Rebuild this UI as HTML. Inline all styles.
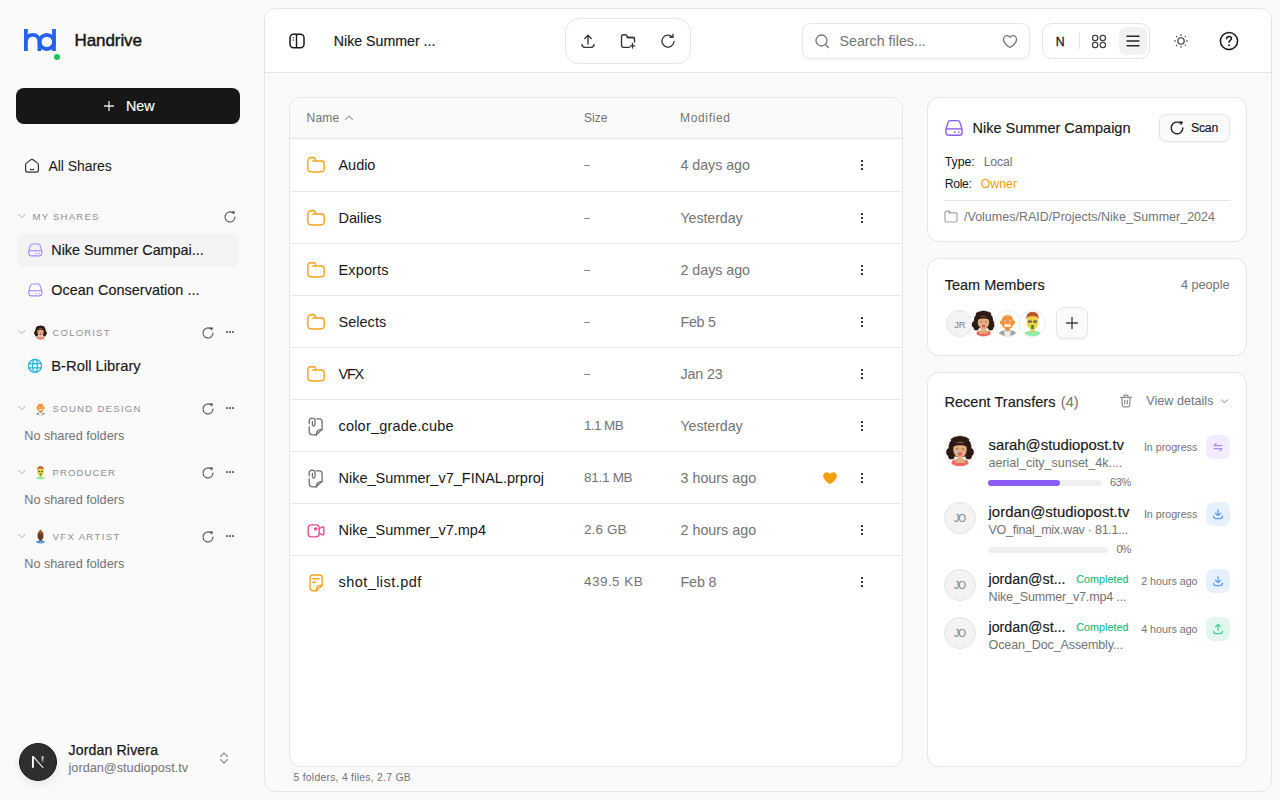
<!DOCTYPE html>
<html><head><meta charset="utf-8">
<style>
*{box-sizing:border-box;margin:0;padding:0}
html,body{width:1280px;height:800px;overflow:hidden;background:#fafafa;font-family:"Liberation Sans",sans-serif;color:#171717}
.abs{position:absolute}
svg{display:block;overflow:visible}
.t{position:absolute;white-space:nowrap;line-height:1}
</style></head><body>
<svg class="abs" style="left:24px;top:29px" width="40" height="32" viewBox="0 0 40 32"><g fill="none" stroke="#2563eb" stroke-width="3.8">
      <path d="M1.9 0V22"/>
      <path d="M1.9 13C1.9 8 5 5.8 8.7 5.8C12.4 5.8 15.4 8 15.4 13V22"/>
      <ellipse cx="22.8" cy="12.9" rx="7.2" ry="7.1"/>
      <path d="M30 0V22"/></g>
    <circle cx="33" cy="28" r="3" fill="#16c65a"/></svg>
<div class="t" style="left:74.50px;top:31.86px;font-size:17px;color:#171717;letter-spacing:-0.078px;-webkit-text-stroke:0.45px #171717;">Handrive</div>
<div class="abs" style="left:16px;top:88px;width:224px;height:36px;background:#171717;border-radius:8px"></div>
<svg class="abs" style="left:103px;top:100px" width="12" height="12" viewBox="0 0 12 12"><path d="M6 1V11M1 6H11" stroke="#e5e5e5" stroke-width="1.3"/></svg>
<div class="t" style="left:126.00px;top:99.40px;font-size:14.3px;color:#fff;letter-spacing:0.045px;-webkit-text-stroke:0.15px #fff;">New</div>
<svg class="abs" style="left:24px;top:158px" width="16" height="16" viewBox="0 0 16 16"><path d="M1.6 6.9C1.6 6.2 1.9 5.6 2.5 5.1L6.6 1.9C7.4 1.3 8.6 1.3 9.4 1.9L13.5 5.1C14.1 5.6 14.4 6.2 14.4 6.9V12.3C14.4 13.6 13.7 14.2 12.4 14.2H3.6C2.3 14.2 1.6 13.6 1.6 12.3Z" fill="none" stroke="#333" stroke-width="1.2" stroke-linejoin="round"/><path d="M6.4 11.2Q8 12.3 9.6 11.2" stroke="#333" fill="none" stroke-width="1.2" stroke-linecap="round"/></svg>
<div class="t" style="left:48.50px;top:159.15px;font-size:14px;color:#171717;letter-spacing:-0.057px;">All Shares</div>
<svg class="abs" style="left:17px;top:213px" width="10" height="6" viewBox="0 0 10 6"><path d="M1.8 1.6L4.9 4.6L8 1.6" stroke="#adadad" fill="none" stroke-width="1" stroke-linecap="round"/></svg>
<div class="t" style="left:32.50px;top:211.87px;font-size:9.6px;color:#8f8f8f;letter-spacing:1.207px;">MY SHARES</div>
<svg class="abs" style="left:224px;top:210.5px" width="12" height="12" viewBox="0 0 12 12"><path d="M11 6A5 5 0 1 1 8.6 1.7" stroke="#555555" fill="none" stroke-width="1.15" stroke-linecap="round"/><path d="M8.3 0.4L10.9 0.9L9.6 3.2Z" fill="#555555" stroke="#555555" stroke-width="0.6" stroke-linejoin="round"/></svg>
<div class="abs" style="left:17px;top:233px;width:222px;height:34px;background:#f3f3f3;border-radius:8px"></div>
<svg class="abs" style="left:27.9px;top:243.1px" width="14.6" height="14" viewBox="0 0 18 16"><g stroke="#a78bfa" fill="none" stroke-width="1.4" stroke-linejoin="round"><path d="M0.95 9L3 2.6C3.4 1.3 4.2 0.65 5.5 0.65H12.5C13.8 0.65 14.6 1.3 15 2.6L17.05 9V12.4C17.05 14.3 16 15.2 14 15.2H4C2 15.2 0.95 14.3 0.95 12.4Z"/><path d="M0.95 8.9H17.05"/></g><rect x="9" y="11.5" width="1.5" height="1.5" fill="#a78bfa"/><rect x="13.1" y="11.5" width="1.5" height="1.5" fill="#a78bfa"/></svg>
<div class="t" style="left:51.25px;top:243.31px;font-size:14.4px;color:#171717;letter-spacing:-0.013px;-webkit-text-stroke:0.15px #171717;">Nike Summer Campai...</div>
<svg class="abs" style="left:27.9px;top:283.1px" width="14.6" height="14" viewBox="0 0 18 16"><g stroke="#a78bfa" fill="none" stroke-width="1.4" stroke-linejoin="round"><path d="M0.95 9L3 2.6C3.4 1.3 4.2 0.65 5.5 0.65H12.5C13.8 0.65 14.6 1.3 15 2.6L17.05 9V12.4C17.05 14.3 16 15.2 14 15.2H4C2 15.2 0.95 14.3 0.95 12.4Z"/><path d="M0.95 8.9H17.05"/></g><rect x="9" y="11.5" width="1.5" height="1.5" fill="#a78bfa"/><rect x="13.1" y="11.5" width="1.5" height="1.5" fill="#a78bfa"/></svg>
<div class="t" style="left:51.25px;top:282.81px;font-size:14.4px;color:#171717;letter-spacing:0.051px;-webkit-text-stroke:0.15px #171717;">Ocean Conservation ...</div>
<svg class="abs" style="left:17px;top:329px" width="10" height="6" viewBox="0 0 10 6"><path d="M1.8 1.6L4.9 4.6L8 1.6" stroke="#adadad" fill="none" stroke-width="1" stroke-linecap="round"/></svg>
<svg class="abs" style="left:32.50px;top:324.50px" width="15" height="15" viewBox="0 0 28 28"><circle cx="14" cy="14" r="13.6" fill="#fff" stroke="#e8e8e8" stroke-width=".8"/>
<clipPath id="clip1"><circle cx="14" cy="14" r="13.2"/></clipPath><g clip-path="url(#clip1)">
<g fill="#2e1b15"><ellipse cx="14" cy="10.5" rx="10" ry="9"/><circle cx="5.5" cy="15" r="3.6"/><circle cx="22.5" cy="15" r="3.6"/><circle cx="6.5" cy="18.5" r="2.8"/><circle cx="21.5" cy="18.5" r="2.8"/><circle cx="9" cy="3.8" r="3"/><circle cx="19" cy="3.8" r="3"/><circle cx="14" cy="2.8" r="3"/></g>
<path d="M5.5 28.5C5.5 23 8.5 20.5 14 20.5C19.5 20.5 22.5 23 22.5 28.5Z" fill="#e3ad80"/>
<path d="M7.2 28.5V22.6L9.6 21.8V24.6H18.4V21.8L20.8 22.6V28.5Z" fill="#f46262"/>
<rect x="12" y="17" width="4" height="5" fill="#e3ad80"/>
<ellipse cx="14" cy="12.8" rx="5.9" ry="6.9" fill="#e3ad80"/>
<path d="M7.6 10.5C8 5.2 20 5.2 20.4 10.5C18.5 8.4 9.5 8.4 7.6 10.5Z" fill="#2e1b15"/>
<ellipse cx="14" cy="16.6" rx="1.7" ry="1.6" fill="#e74f6b"/>
<path d="M10.6 12.2H12.4M15.6 12.2H17.4" stroke="#6b4a35" stroke-width=".7"/>
<ellipse cx="11" cy="14.5" rx=".8" ry="1.1" fill="#9fd3e8"/></g></svg>
<div class="t" style="left:52.50px;top:327.67px;font-size:9.6px;color:#8f8f8f;letter-spacing:1.136px;">COLORIST</div>
<svg class="abs" style="left:202px;top:326.5px" width="12" height="12" viewBox="0 0 12 12"><path d="M11 6A5 5 0 1 1 8.6 1.7" stroke="#555555" fill="none" stroke-width="1.15" stroke-linecap="round"/><path d="M8.3 0.4L10.9 0.9L9.6 3.2Z" fill="#555555" stroke="#555555" stroke-width="0.6" stroke-linejoin="round"/></svg>
<svg class="abs" style="left:225px;top:330px" width="10" height="4" viewBox="0 0 10 4"><rect x="1.1" y="1.2" width="1.7" height="1.7" fill="#404040"/><rect x="4.15" y="1.2" width="1.7" height="1.7" fill="#404040"/><rect x="7.2" y="1.2" width="1.7" height="1.7" fill="#404040"/></svg>
<svg class="abs" style="left:27px;top:358px" width="16" height="16" viewBox="0 0 16 16"><g fill="none" stroke="#1fb5d6" stroke-width="1.25"><circle cx="8" cy="7.9" r="6.5"/><ellipse cx="8" cy="7.9" rx="2.35" ry="6.5"/><path d="M1.6 5.7H14.4M1.6 9.9H14.4"/></g></svg>
<div class="t" style="left:51.25px;top:358.97px;font-size:14.8px;color:#171717;letter-spacing:-0.011px;-webkit-text-stroke:0.15px #171717;">B-Roll Library</div>
<svg class="abs" style="left:17px;top:405px" width="10" height="6" viewBox="0 0 10 6"><path d="M1.8 1.6L4.9 4.6L8 1.6" stroke="#adadad" fill="none" stroke-width="1" stroke-linecap="round"/></svg>
<svg class="abs" style="left:32.50px;top:400.50px" width="15" height="15" viewBox="0 0 28 28"><circle cx="14" cy="14" r="13.6" fill="#fff" stroke="#e8e8e8" stroke-width=".8"/>
<clipPath id="clip2"><circle cx="14" cy="14" r="13.2"/></clipPath><g clip-path="url(#clip2)">
<path d="M3.5 28.5C3.5 23 7.5 21 14 21C20.5 21 24.5 23 24.5 28.5Z" fill="#a3a3a3"/>
<path d="M10.5 21H17.5L16.5 28.5H11.5Z" fill="#ececec"/>
<rect x="11.8" y="17" width="4.4" height="5" fill="#f28c3a"/>
<ellipse cx="14" cy="12.5" rx="6.4" ry="7.6" fill="#f7923c"/>
<ellipse cx="7.4" cy="13" rx="1.3" ry="2" fill="#f7923c"/><ellipse cx="20.6" cy="13" rx="1.3" ry="2" fill="#f7923c"/>
<path d="M8.6 6.2C10 3.8 18 3.8 19.4 6.2C17.2 5.4 10.8 5.4 8.6 6.2Z" fill="#e6e6e6"/>
<circle cx="11.4" cy="11.8" r="1.1" fill="#fff"/><circle cx="16.6" cy="11.8" r="1.1" fill="#fff"/>
<circle cx="11.4" cy="11.8" r=".55" fill="#333"/><circle cx="16.6" cy="11.8" r=".55" fill="#333"/>
<rect x="10.6" y="14.8" width="6.8" height="2.6" rx="1.1" fill="#fff"/></g></svg>
<div class="t" style="left:52.50px;top:403.67px;font-size:9.6px;color:#8f8f8f;letter-spacing:1.263px;">SOUND DESIGN</div>
<svg class="abs" style="left:202px;top:402.5px" width="12" height="12" viewBox="0 0 12 12"><path d="M11 6A5 5 0 1 1 8.6 1.7" stroke="#555555" fill="none" stroke-width="1.15" stroke-linecap="round"/><path d="M8.3 0.4L10.9 0.9L9.6 3.2Z" fill="#555555" stroke="#555555" stroke-width="0.6" stroke-linejoin="round"/></svg>
<svg class="abs" style="left:225px;top:406px" width="10" height="4" viewBox="0 0 10 4"><rect x="1.1" y="1.2" width="1.7" height="1.7" fill="#404040"/><rect x="4.15" y="1.2" width="1.7" height="1.7" fill="#404040"/><rect x="7.2" y="1.2" width="1.7" height="1.7" fill="#404040"/></svg>
<div class="t" style="left:24.25px;top:430.05px;font-size:12.7px;color:#737373;letter-spacing:-0.010px;">No shared folders</div>
<svg class="abs" style="left:17px;top:469px" width="10" height="6" viewBox="0 0 10 6"><path d="M1.8 1.6L4.9 4.6L8 1.6" stroke="#adadad" fill="none" stroke-width="1" stroke-linecap="round"/></svg>
<svg class="abs" style="left:32.50px;top:464.50px" width="15" height="15" viewBox="0 0 28 28"><circle cx="14" cy="14" r="13.6" fill="#fff" stroke="#e8e8e8" stroke-width=".8"/>
<clipPath id="clip3"><circle cx="14" cy="14" r="13.2"/></clipPath><g clip-path="url(#clip3)">
<path d="M3.5 28.5C3.5 23.5 7.5 21.5 14 21.5C20.5 21.5 24.5 23.5 24.5 28.5Z" fill="#8ef0a8"/>
<rect x="11.8" y="17" width="4.4" height="6" fill="#edcb47"/>
<ellipse cx="14" cy="12.6" rx="6.2" ry="7.4" fill="#f2d24c"/>
<path d="M7.6 10C7.2 4 10.5 2.2 14 2.2C18 2.2 20.8 3.8 20.4 10C19.5 7.2 17.8 6.6 14 6.6C10.2 6.6 8.5 7.2 7.6 10Z" fill="#b8582c"/>
<ellipse cx="11.3" cy="12" rx="2.2" ry="1.4" fill="#6e6a3a"/><ellipse cx="16.7" cy="12" rx="2.2" ry="1.4" fill="#6e6a3a"/>
<rect x="12.6" y="15.6" width="2.8" height="4" fill="#3d8a3a"/></g></svg>
<div class="t" style="left:52.50px;top:467.67px;font-size:9.6px;color:#8f8f8f;letter-spacing:1.085px;">PRODUCER</div>
<svg class="abs" style="left:202px;top:466.5px" width="12" height="12" viewBox="0 0 12 12"><path d="M11 6A5 5 0 1 1 8.6 1.7" stroke="#555555" fill="none" stroke-width="1.15" stroke-linecap="round"/><path d="M8.3 0.4L10.9 0.9L9.6 3.2Z" fill="#555555" stroke="#555555" stroke-width="0.6" stroke-linejoin="round"/></svg>
<svg class="abs" style="left:225px;top:470px" width="10" height="4" viewBox="0 0 10 4"><rect x="1.1" y="1.2" width="1.7" height="1.7" fill="#404040"/><rect x="4.15" y="1.2" width="1.7" height="1.7" fill="#404040"/><rect x="7.2" y="1.2" width="1.7" height="1.7" fill="#404040"/></svg>
<div class="t" style="left:24.25px;top:493.85px;font-size:12.7px;color:#737373;letter-spacing:-0.010px;">No shared folders</div>
<svg class="abs" style="left:17px;top:533px" width="10" height="6" viewBox="0 0 10 6"><path d="M1.8 1.6L4.9 4.6L8 1.6" stroke="#adadad" fill="none" stroke-width="1" stroke-linecap="round"/></svg>
<svg class="abs" style="left:32.50px;top:528.50px" width="15" height="15" viewBox="0 0 28 28"><circle cx="14" cy="14" r="13.6" fill="#fff" stroke="#e8e8e8" stroke-width=".8"/>
<clipPath id="clip4"><circle cx="14" cy="14" r="13.2"/></clipPath><g clip-path="url(#clip4)">
<path d="M3.5 28.5C3.5 23.5 7.5 21.5 14 21.5C20.5 21.5 24.5 23.5 24.5 28.5Z" fill="#3b8fe8"/>
<path d="M12 21.5H16L14 25.5Z" fill="#fff"/>
<rect x="11.8" y="17" width="4.4" height="6" fill="#5e3520"/>
<ellipse cx="14" cy="13" rx="5.6" ry="7.2" fill="#6a3d24"/>
<path d="M8.4 9.5C8.6 5.2 10.8 4.2 14 4.2C17.2 4.2 19.4 5.2 19.6 9.5C17.5 8.2 10.5 8.2 8.4 9.5Z" fill="#a4511c"/>
<rect x="12.4" y="1.2" width="3.2" height="4.4" rx="1.3" fill="#a4511c"/></g></svg>
<div class="t" style="left:52.50px;top:531.67px;font-size:9.6px;color:#8f8f8f;letter-spacing:1.335px;">VFX ARTIST</div>
<svg class="abs" style="left:202px;top:530.5px" width="12" height="12" viewBox="0 0 12 12"><path d="M11 6A5 5 0 1 1 8.6 1.7" stroke="#555555" fill="none" stroke-width="1.15" stroke-linecap="round"/><path d="M8.3 0.4L10.9 0.9L9.6 3.2Z" fill="#555555" stroke="#555555" stroke-width="0.6" stroke-linejoin="round"/></svg>
<svg class="abs" style="left:225px;top:534px" width="10" height="4" viewBox="0 0 10 4"><rect x="1.1" y="1.2" width="1.7" height="1.7" fill="#404040"/><rect x="4.15" y="1.2" width="1.7" height="1.7" fill="#404040"/><rect x="7.2" y="1.2" width="1.7" height="1.7" fill="#404040"/></svg>
<div class="t" style="left:24.25px;top:558.05px;font-size:12.7px;color:#737373;letter-spacing:-0.010px;">No shared folders</div>
<div class="abs" style="left:19px;top:743px;width:38px;height:38px;border-radius:50%;background:#2e2e2e;border:1.5px solid #1a1a1a;box-shadow:0 4px 10px rgba(0,0,0,.08)"></div>
<svg class="abs" style="left:29px;top:753px" width="20" height="20" viewBox="0 0 20 20"><defs><linearGradient id="ng" gradientUnits="userSpaceOnUse" x1="0" y1="3" x2="0" y2="11"><stop offset="0" stop-color="#fff"/><stop offset="1" stop-color="#fff" stop-opacity="0"/></linearGradient></defs><path d="M3.9 14.8V3.3" stroke="#fff" stroke-width="1.9" fill="none"/><path d="M3.3 3.3H4.7L14.8 14.8H13.4Z" fill="#fff"/><path d="M13.6 3.3V9.5" stroke="url(#ng)" stroke-width="1.9"/></svg>
<div class="t" style="left:68.50px;top:743.17px;font-size:14.1px;color:#171717;letter-spacing:0.146px;-webkit-text-stroke:0.25px #171717;">Jordan Rivera</div>
<div class="t" style="left:68.50px;top:762.25px;font-size:12.7px;color:#737373;letter-spacing:0.011px;">jordan@studiopost.tv</div>
<svg class="abs" style="left:218px;top:752px" width="12" height="12" viewBox="0 0 12 12"><path d="M2.5 4.5L6 1L9.5 4.5M2.5 7.5L6 11L9.5 7.5" stroke="#8c8c8c" fill="none" stroke-width="1.1" stroke-linecap="round" stroke-linejoin="round"/></svg>
<div class="abs" style="left:264px;top:8px;width:1008px;height:784px;background:#fafafa;border:1px solid #e5e5e5;border-radius:12px;overflow:hidden"><div class="abs" style="left:0;top:0;width:1006px;height:64px;background:#fff;border-bottom:1px solid #e5e5e5"></div></div>
<svg class="abs" style="left:289px;top:33px" width="16" height="16" viewBox="0 0 16 16"><rect x="1" y="1.2" width="14" height="13.6" rx="3.5" fill="none" stroke="#171717" stroke-width="1.5"/><path d="M7.5 1.5V14.5" stroke="#171717" stroke-width="1.4"/><circle cx="4.2" cy="4.6" r=".7" fill="#171717"/><circle cx="4.2" cy="7" r=".7" fill="#171717"/></svg>
<div class="t" style="left:333.80px;top:33.88px;font-size:14.2px;color:#171717;letter-spacing:-0.007px;-webkit-text-stroke:0.15px #171717;">Nike Summer ...</div>
<div class="abs" style="left:565px;top:18px;width:126px;height:46px;border:1px solid #e5e5e5;border-radius:14px;background:#fff"></div>
<svg class="abs" style="left:580px;top:33px" width="16" height="16" viewBox="0 0 16 16"><path d="M8 11V2.5M4.8 5.5L8 2.3L11.2 5.5" fill="none" stroke="#333" stroke-width="1.35" stroke-linecap="round" stroke-linejoin="round"/><path d="M2 11.5C2 13.5 3 14.3 5 14.3H11C13 14.3 14 13.5 14 11.5" fill="none" stroke="#333" stroke-width="1.35" stroke-linecap="round" stroke-linejoin="round"/></svg>
<svg class="abs" style="left:620px;top:33px" width="16" height="16" viewBox="0 0 16 16"><path d="M14.5 9V6.5C14.5 5.3 13.8 4.5 12.5 4.5H8L6.5 2.3C6.2 1.9 5.8 1.7 5.2 1.7H3.5C2.2 1.7 1.5 2.5 1.5 3.8V12C1.5 13.4 2.3 14.3 3.7 14.3H9.5" fill="none" stroke="#333" stroke-width="1.35" stroke-linecap="round" stroke-linejoin="round"/><path d="M12.5 10.5V15M10.2 12.8H14.8" fill="none" stroke="#333" stroke-width="1.35" stroke-linecap="round" stroke-linejoin="round"/><path d="M7 4.5H14" fill="none" stroke="#333" stroke-width="1.35" stroke-linecap="round" stroke-linejoin="round"/></svg>
<svg class="abs" style="left:660px;top:33px" width="16" height="16" viewBox="0 0 16 16"><path d="M14 8.5A6 6 0 1 1 12.2 3.8" fill="none" stroke="#333" stroke-width="1.35" stroke-linecap="round" stroke-linejoin="round"/><path d="M13 1.2V4.2H10" fill="none" stroke="#333" stroke-width="1.35" stroke-linecap="round" stroke-linejoin="round"/></svg>
<div class="abs" style="left:802px;top:23px;width:228px;height:36px;border:1px solid #e5e5e5;border-radius:8px;background:#fff;box-shadow:0 1px 2px rgba(0,0,0,.04)"></div>
<svg class="abs" style="left:815px;top:34px" width="15" height="15" viewBox="0 0 15 15"><circle cx="6.5" cy="6.5" r="5.5" fill="none" stroke="#737373" stroke-width="1.3"/><path d="M10.5 10.5L13.5 13.5" stroke="#737373" stroke-width="1.3" stroke-linecap="round"/></svg>
<div class="t" style="left:839.50px;top:34.04px;font-size:14.25px;color:#737373;letter-spacing:-0.002px;">Search files...</div>
<svg class="abs" style="left:1002px;top:34px" width="16" height="15" viewBox="0 0 16 15"><path d="M8 13.5C8 13.5 1.5 9.8 1.5 5.3C1.5 3.2 3.1 1.6 5 1.6C6.3 1.6 7.4 2.3 8 3.3C8.6 2.3 9.7 1.6 11 1.6C12.9 1.6 14.5 3.2 14.5 5.3C14.5 9.8 8 13.5 8 13.5Z" fill="none" stroke="#737373" stroke-width="1.3" stroke-linejoin="round"/></svg>
<div class="abs" style="left:1042px;top:23px;width:108px;height:36px;border:1px solid #e5e5e5;border-radius:10px;background:#fff"></div>
<div class="t" style="left:1055.80px;top:35.59px;font-size:12.3px;color:#171717;-webkit-text-stroke:0.3px #171717;">N</div>
<div class="abs" style="left:1079px;top:33px;width:1px;height:16px;background:#e5e5e5"></div>
<svg class="abs" style="left:1091px;top:34px" width="16" height="15" viewBox="0 0 16 15"><g fill="none" stroke="#404040" stroke-width="1.25"><rect x="1.5" y="1.3" width="5.3" height="5.3" rx="2.4"/><rect x="9.2" y="1.3" width="5.3" height="5.3" rx="2.4"/><rect x="1.5" y="8.4" width="5.3" height="5.3" rx="2.4"/><rect x="9.2" y="8.4" width="5.3" height="5.3" rx="2.4"/></g></svg>
<div class="abs" style="left:1119px;top:27px;width:28px;height:28px;background:#f2f2f2;border-radius:7px"></div>
<svg class="abs" style="left:1126px;top:34px" width="14" height="14" viewBox="0 0 14 14"><path d="M1 2.2H13M1 7H13M1 11.8H13" stroke="#262626" stroke-width="1.4" stroke-linecap="round"/></svg>
<svg class="abs" style="left:1173px;top:33px" width="16" height="16" viewBox="0 0 16 16"><circle cx="8" cy="7.9" r="3.15" fill="none" stroke="#3a3a3a" stroke-width="1.2"/><g fill="#444"><rect x="7.3" y="1.2" width="1.4" height="1.4"/><rect x="7.3" y="13.2" width="1.4" height="1.4"/><rect x="1.3" y="7.2" width="1.4" height="1.4"/><rect x="13.3" y="7.2" width="1.4" height="1.4"/><rect x="3" y="2.9" width="1.2" height="1.2"/><rect x="11.8" y="2.9" width="1.2" height="1.2"/><rect x="3" y="11.7" width="1.2" height="1.2"/><rect x="11.8" y="11.7" width="1.2" height="1.2"/></g></svg>
<svg class="abs" style="left:1219px;top:31px" width="20" height="20" viewBox="0 0 20 20"><circle cx="10" cy="10" r="8.6" fill="none" stroke="#171717" stroke-width="1.5"/><path d="M7.6 7.8C7.6 6.4 8.7 5.5 10 5.5C11.4 5.5 12.4 6.4 12.4 7.6C12.4 9.2 10 9.5 10 11.2" fill="none" stroke="#171717" stroke-width="1.5" stroke-linecap="round"/><circle cx="10" cy="14.2" r=".95" fill="#171717"/></svg>
<div class="abs" style="left:289px;top:97px;width:614px;height:670px;background:#fff;border:1px solid #e5e5e5;border-radius:12px;overflow:hidden"><div class="abs" style="left:0;top:0;width:612px;height:41px;background:#fafafa;border-bottom:1px solid #e5e5e5"></div></div>
<div class="t" style="left:306.60px;top:111.59px;font-size:12px;color:#737373;letter-spacing:0.161px;">Name</div>
<svg class="abs" style="left:344px;top:114px" width="10" height="7" viewBox="0 0 10 7"><path d="M1.5 5.5L5 2L8.5 5.5" stroke="#a3a3a3" fill="none" stroke-width="1.1" stroke-linecap="round"/></svg>
<div class="t" style="left:584.00px;top:111.59px;font-size:12px;color:#737373;letter-spacing:0.019px;">Size</div>
<div class="t" style="left:680.00px;top:111.59px;font-size:12px;color:#737373;letter-spacing:0.663px;">Modified</div>
<svg class="abs" style="left:302px;top:154px" width="24" height="24" viewBox="0 0 24 24"><path d="M5.8 10.5C5.8 5.5 5.9 3.7 8.6 3.7H11.8C12.5 3.7 12.9 4 13.2 4.6L14 7H19.5C21.8 7 22.25 8 22.25 10.5V14.2C22.25 17.6 21.2 18.05 14 18.05C6.8 18.05 5.8 17.6 5.8 14.2Z M10.8 7H14" fill="none" stroke="#f9a01b" stroke-width="1.4" stroke-linejoin="round" stroke-linecap="round"/></svg>
<div class="t" style="left:338.50px;top:157.83px;font-size:14.5px;color:#171717;letter-spacing:-0.048px;">Audio</div>
<div class="abs" style="left:584px;top:165.2px;width:6px;height:1.1px;background:#8a8a8a"></div>
<div class="t" style="left:680.50px;top:158.00px;font-size:14.3px;color:#737373;letter-spacing:-0.061px;">4 days ago</div>
<svg class="abs" style="left:860px;top:157px" width="4" height="16" viewBox="0 0 4 16"><rect x="1" y="3" width="2" height="2" rx=".4" fill="#171717"/><rect x="1" y="7" width="2" height="2" rx=".4" fill="#171717"/><rect x="1" y="11" width="2" height="2" rx=".4" fill="#171717"/></svg>
<div class="abs" style="left:290px;top:191px;width:612px;height:1px;background:#ebebeb"></div>
<svg class="abs" style="left:302px;top:207px" width="24" height="24" viewBox="0 0 24 24"><path d="M5.8 10.5C5.8 5.5 5.9 3.7 8.6 3.7H11.8C12.5 3.7 12.9 4 13.2 4.6L14 7H19.5C21.8 7 22.25 8 22.25 10.5V14.2C22.25 17.6 21.2 18.05 14 18.05C6.8 18.05 5.8 17.6 5.8 14.2Z M10.8 7H14" fill="none" stroke="#f9a01b" stroke-width="1.4" stroke-linejoin="round" stroke-linecap="round"/></svg>
<div class="t" style="left:338.50px;top:210.53px;font-size:14.5px;color:#171717;letter-spacing:-0.086px;">Dailies</div>
<div class="abs" style="left:584px;top:218.2px;width:6px;height:1.1px;background:#8a8a8a"></div>
<div class="t" style="left:680.50px;top:210.70px;font-size:14.3px;color:#737373;letter-spacing:-0.108px;">Yesterday</div>
<svg class="abs" style="left:860px;top:210px" width="4" height="16" viewBox="0 0 4 16"><rect x="1" y="3" width="2" height="2" rx=".4" fill="#171717"/><rect x="1" y="7" width="2" height="2" rx=".4" fill="#171717"/><rect x="1" y="11" width="2" height="2" rx=".4" fill="#171717"/></svg>
<div class="abs" style="left:290px;top:243px;width:612px;height:1px;background:#ebebeb"></div>
<svg class="abs" style="left:302px;top:259px" width="24" height="24" viewBox="0 0 24 24"><path d="M5.8 10.5C5.8 5.5 5.9 3.7 8.6 3.7H11.8C12.5 3.7 12.9 4 13.2 4.6L14 7H19.5C21.8 7 22.25 8 22.25 10.5V14.2C22.25 17.6 21.2 18.05 14 18.05C6.8 18.05 5.8 17.6 5.8 14.2Z M10.8 7H14" fill="none" stroke="#f9a01b" stroke-width="1.4" stroke-linejoin="round" stroke-linecap="round"/></svg>
<div class="t" style="left:338.50px;top:262.53px;font-size:14.5px;color:#171717;letter-spacing:0.138px;">Exports</div>
<div class="abs" style="left:584px;top:270.2px;width:6px;height:1.1px;background:#8a8a8a"></div>
<div class="t" style="left:680.50px;top:262.70px;font-size:14.3px;color:#737373;letter-spacing:-0.050px;">2 days ago</div>
<svg class="abs" style="left:860px;top:262px" width="4" height="16" viewBox="0 0 4 16"><rect x="1" y="3" width="2" height="2" rx=".4" fill="#171717"/><rect x="1" y="7" width="2" height="2" rx=".4" fill="#171717"/><rect x="1" y="11" width="2" height="2" rx=".4" fill="#171717"/></svg>
<div class="abs" style="left:290px;top:295px;width:612px;height:1px;background:#ebebeb"></div>
<svg class="abs" style="left:302px;top:311px" width="24" height="24" viewBox="0 0 24 24"><path d="M5.8 10.5C5.8 5.5 5.9 3.7 8.6 3.7H11.8C12.5 3.7 12.9 4 13.2 4.6L14 7H19.5C21.8 7 22.25 8 22.25 10.5V14.2C22.25 17.6 21.2 18.05 14 18.05C6.8 18.05 5.8 17.6 5.8 14.2Z M10.8 7H14" fill="none" stroke="#f9a01b" stroke-width="1.4" stroke-linejoin="round" stroke-linecap="round"/></svg>
<div class="t" style="left:338.50px;top:314.53px;font-size:14.5px;color:#171717;letter-spacing:0.023px;">Selects</div>
<div class="abs" style="left:584px;top:322.2px;width:6px;height:1.1px;background:#8a8a8a"></div>
<div class="t" style="left:680.50px;top:314.70px;font-size:14.3px;color:#737373;letter-spacing:-0.291px;">Feb 5</div>
<svg class="abs" style="left:860px;top:314px" width="4" height="16" viewBox="0 0 4 16"><rect x="1" y="3" width="2" height="2" rx=".4" fill="#171717"/><rect x="1" y="7" width="2" height="2" rx=".4" fill="#171717"/><rect x="1" y="11" width="2" height="2" rx=".4" fill="#171717"/></svg>
<div class="abs" style="left:290px;top:347px;width:612px;height:1px;background:#ebebeb"></div>
<svg class="abs" style="left:302px;top:363px" width="24" height="24" viewBox="0 0 24 24"><path d="M5.8 10.5C5.8 5.5 5.9 3.7 8.6 3.7H11.8C12.5 3.7 12.9 4 13.2 4.6L14 7H19.5C21.8 7 22.25 8 22.25 10.5V14.2C22.25 17.6 21.2 18.05 14 18.05C6.8 18.05 5.8 17.6 5.8 14.2Z M10.8 7H14" fill="none" stroke="#f9a01b" stroke-width="1.4" stroke-linejoin="round" stroke-linecap="round"/></svg>
<div class="t" style="left:338.50px;top:366.53px;font-size:14.5px;color:#171717;letter-spacing:-1.202px;">VFX</div>
<div class="abs" style="left:584px;top:374.2px;width:6px;height:1.1px;background:#8a8a8a"></div>
<div class="t" style="left:680.50px;top:366.70px;font-size:14.3px;color:#737373;letter-spacing:-0.147px;">Jan 23</div>
<svg class="abs" style="left:860px;top:366px" width="4" height="16" viewBox="0 0 4 16"><rect x="1" y="3" width="2" height="2" rx=".4" fill="#171717"/><rect x="1" y="7" width="2" height="2" rx=".4" fill="#171717"/><rect x="1" y="11" width="2" height="2" rx=".4" fill="#171717"/></svg>
<div class="abs" style="left:290px;top:399px;width:612px;height:1px;background:#ebebeb"></div>
<svg class="abs" style="left:302px;top:415px" width="24" height="24" viewBox="0 0 24 24"><g fill="none" stroke="#707070" stroke-width="1.3" stroke-linejoin="round" stroke-linecap="round"><path d="M7.2 8.8V6.3C7.2 4.5 8.4 3.2 10.1 3.2C11.8 3.2 13 4.5 13 6.3V9.3C13 10.4 12.4 11.1 11.7 11.1C11 11.1 10.4 10.4 10.4 9.3V6.5"/><path d="M7.2 11.8V16.5C7.2 19 8.5 19.8 11 19.8H14.3"/><path d="M14.3 3.8H17.5C19.5 3.8 20.1 4.8 20.1 6.8V14.3L14.3 19.8"/><path d="M14.3 19.8C14.3 16.3 15.6 14.3 20.1 14.3"/></g></svg>
<div class="t" style="left:338.50px;top:418.53px;font-size:14.5px;color:#171717;letter-spacing:0.196px;">color_grade.cube</div>
<div class="t" style="left:584.00px;top:419.37px;font-size:13.5px;color:#737373;letter-spacing:-0.616px;">1.1 MB</div>
<div class="t" style="left:680.50px;top:418.70px;font-size:14.3px;color:#737373;letter-spacing:-0.108px;">Yesterday</div>
<svg class="abs" style="left:860px;top:418px" width="4" height="16" viewBox="0 0 4 16"><rect x="1" y="3" width="2" height="2" rx=".4" fill="#171717"/><rect x="1" y="7" width="2" height="2" rx=".4" fill="#171717"/><rect x="1" y="11" width="2" height="2" rx=".4" fill="#171717"/></svg>
<div class="abs" style="left:290px;top:451px;width:612px;height:1px;background:#ebebeb"></div>
<svg class="abs" style="left:302px;top:467px" width="24" height="24" viewBox="0 0 24 24"><g fill="none" stroke="#707070" stroke-width="1.3" stroke-linejoin="round" stroke-linecap="round"><path d="M7.2 8.8V6.3C7.2 4.5 8.4 3.2 10.1 3.2C11.8 3.2 13 4.5 13 6.3V9.3C13 10.4 12.4 11.1 11.7 11.1C11 11.1 10.4 10.4 10.4 9.3V6.5"/><path d="M7.2 11.8V16.5C7.2 19 8.5 19.8 11 19.8H14.3"/><path d="M14.3 3.8H17.5C19.5 3.8 20.1 4.8 20.1 6.8V14.3L14.3 19.8"/><path d="M14.3 19.8C14.3 16.3 15.6 14.3 20.1 14.3"/></g></svg>
<div class="t" style="left:338.50px;top:470.53px;font-size:14.5px;color:#171717;">Nike_Summer_v7_FINAL.prproj</div>
<div class="t" style="left:584.00px;top:471.37px;font-size:13.5px;color:#737373;letter-spacing:-0.280px;">81.1 MB</div>
<div class="t" style="left:680.50px;top:470.70px;font-size:14.3px;color:#737373;letter-spacing:0.008px;">3 hours ago</div>
<svg class="abs" style="left:860px;top:470px" width="4" height="16" viewBox="0 0 4 16"><rect x="1" y="3" width="2" height="2" rx=".4" fill="#171717"/><rect x="1" y="7" width="2" height="2" rx=".4" fill="#171717"/><rect x="1" y="11" width="2" height="2" rx=".4" fill="#171717"/></svg>
<svg class="abs" style="left:822px;top:471px" width="16" height="14" viewBox="0 0 16 14"><path d="M8 13C8 13 1.2 9.2 1.2 4.9C1.2 2.8 2.8 1.2 4.7 1.2C6.1 1.2 7.3 2 8 3.1C8.7 2 9.9 1.2 11.3 1.2C13.2 1.2 14.8 2.8 14.8 4.9C14.8 9.2 8 13 8 13Z" fill="#f59e0b"/></svg>
<div class="abs" style="left:290px;top:503px;width:612px;height:1px;background:#ebebeb"></div>
<svg class="abs" style="left:302px;top:519px" width="24" height="24" viewBox="0 0 24 24"><g fill="none" stroke="#ec4899" stroke-width="1.35" stroke-linejoin="round" stroke-linecap="round"><rect x="6.2" y="5.9" width="11" height="11.9" rx="3.2"/><path d="M17.2 9.5L20.9 7.9C21.6 7.6 21.8 8 21.8 8.7V15.1C21.8 15.8 21.6 16.2 20.9 15.9L17.2 14.3"/><circle cx="13.65" cy="10.05" r="1.05"/></g></svg>
<div class="t" style="left:338.50px;top:522.53px;font-size:14.5px;color:#171717;letter-spacing:0.001px;">Nike_Summer_v7.mp4</div>
<div class="t" style="left:584.00px;top:523.37px;font-size:13.5px;color:#737373;letter-spacing:0.094px;">2.6 GB</div>
<div class="t" style="left:680.50px;top:522.70px;font-size:14.3px;color:#737373;letter-spacing:0.008px;">2 hours ago</div>
<svg class="abs" style="left:860px;top:522px" width="4" height="16" viewBox="0 0 4 16"><rect x="1" y="3" width="2" height="2" rx=".4" fill="#171717"/><rect x="1" y="7" width="2" height="2" rx=".4" fill="#171717"/><rect x="1" y="11" width="2" height="2" rx=".4" fill="#171717"/></svg>
<div class="abs" style="left:290px;top:555px;width:612px;height:1px;background:#ebebeb"></div>
<svg class="abs" style="left:302px;top:571px" width="24" height="24" viewBox="0 0 24 24"><g fill="none" stroke="#f9a01b" stroke-width="1.35" stroke-linejoin="round" stroke-linecap="round"><path d="M11 4H17.3C19.3 4 20.15 5 20.15 7V14.2L14.3 19.7H11C9 19.7 8.05 18.7 8.05 16.7V7C8.05 5 9 4 11 4Z"/><path d="M14.3 19.7C14.3 16 15.5 14.2 20.15 14.2"/><path d="M11 7.75H17M11 11.2H13.8"/></g></svg>
<div class="t" style="left:338.50px;top:574.53px;font-size:14.5px;color:#171717;letter-spacing:0.442px;">shot_list.pdf</div>
<div class="t" style="left:584.00px;top:575.37px;font-size:13.5px;color:#737373;letter-spacing:0.458px;">439.5 KB</div>
<div class="t" style="left:680.50px;top:574.70px;font-size:14.3px;color:#737373;letter-spacing:-0.141px;">Feb 8</div>
<svg class="abs" style="left:860px;top:574px" width="4" height="16" viewBox="0 0 4 16"><rect x="1" y="3" width="2" height="2" rx=".4" fill="#171717"/><rect x="1" y="7" width="2" height="2" rx=".4" fill="#171717"/><rect x="1" y="11" width="2" height="2" rx=".4" fill="#171717"/></svg>
<div class="t" style="left:293.50px;top:773.00px;font-size:10.4px;color:#737373;letter-spacing:0.252px;">5 folders, 4 files, 2.7 GB</div>
<div class="abs" style="left:927px;top:97px;width:320px;height:145px;background:#fff;border:1px solid #e5e5e5;border-radius:12px"></div>
<svg class="abs" style="left:945px;top:120px" width="18" height="16" viewBox="0 0 18 16"><g stroke="#8b5cf6" fill="none" stroke-width="1.4" stroke-linejoin="round"><path d="M0.95 9L3 2.6C3.4 1.3 4.2 0.65 5.5 0.65H12.5C13.8 0.65 14.6 1.3 15 2.6L17.05 9V12.4C17.05 14.3 16 15.2 14 15.2H4C2 15.2 0.95 14.3 0.95 12.4Z"/><path d="M0.95 8.9H17.05"/></g><rect x="9" y="11.5" width="1.5" height="1.5" fill="#8b5cf6"/><rect x="13.1" y="11.5" width="1.5" height="1.5" fill="#8b5cf6"/></svg>
<div class="t" style="left:972.50px;top:120.93px;font-size:14.5px;color:#171717;letter-spacing:0.002px;-webkit-text-stroke:0.15px #171717;">Nike Summer Campaign</div>
<div class="abs" style="left:1159px;top:114px;width:71px;height:28px;border:1px solid #e5e5e5;border-radius:7px;background:#fafafa;box-shadow:0 1px 2px rgba(0,0,0,.05)"></div>
<svg class="abs" style="left:1170px;top:121.0px" width="14" height="14" viewBox="0 0 12 12"><path d="M11 6A5 5 0 1 1 8.6 1.7" stroke="#262626" fill="none" stroke-width="1.2" stroke-linecap="round"/><path d="M8.3 0.4L10.9 0.9L9.6 3.2Z" fill="#262626" stroke="#262626" stroke-width="0.6" stroke-linejoin="round"/></svg>
<div class="t" style="left:1191.00px;top:121.89px;font-size:12.3px;color:#171717;letter-spacing:-0.244px;-webkit-text-stroke:0.15px #171717;">Scan</div>
<div class="t" style="left:944.70px;top:156.09px;font-size:12.3px;color:#171717;letter-spacing:-0.020px;">Type:</div>
<div class="t" style="left:983.70px;top:156.09px;font-size:12.3px;color:#737373;letter-spacing:-0.152px;">Local</div>
<div class="t" style="left:944.70px;top:177.69px;font-size:12.3px;color:#171717;letter-spacing:-0.355px;">Role:</div>
<div class="t" style="left:980.70px;top:177.69px;font-size:12.3px;color:#f59e0b;letter-spacing:0.020px;">Owner</div>
<div class="abs" style="left:944px;top:200px;width:286px;height:1px;background:#e5e5e5"></div>
<svg class="abs" style="left:944px;top:210px" width="14" height="13" viewBox="0 0 14 13"><path d="M1 3C1 1.9 1.7 1.2 2.8 1.2H4.8C5.4 1.2 5.8 1.5 6.1 2L6.5 2.8H11.2C12.3 2.8 13 3.5 13 4.6V10.2C13 11.3 12.3 12 11.2 12H2.8C1.7 12 1 11.3 1 10.2Z M6.5 2.8H4" fill="none" stroke="#a3a3a3" stroke-width="1.2" stroke-linejoin="round"/></svg>
<div class="t" style="left:964.00px;top:210.92px;font-size:12.5px;color:#737373;letter-spacing:0.005px;">/Volumes/RAID/Projects/Nike_Summer_2024</div>
<div class="abs" style="left:927px;top:258px;width:320px;height:98px;background:#fff;border:1px solid #e5e5e5;border-radius:12px"></div>
<div class="t" style="left:944.70px;top:277.53px;font-size:14.5px;color:#171717;letter-spacing:0.007px;-webkit-text-stroke:0.15px #171717;">Team Members</div>
<div class="t" style="right:50.51px;top:278.75px;font-size:12.7px;color:#737373;letter-spacing:-0.012px;">4 people</div>
<div class="abs" style="left:946px;top:309.5px;width:27px;height:27px;border-radius:50%;background:#f3f3f3;border:1px solid #e3e3e3"></div>
<div class="t" style="left:954.30px;top:319.84px;font-size:9.4px;color:#808080;letter-spacing:-0.269px;">JR</div>
<svg class="abs" style="left:969.50px;top:309.50px" width="27" height="27" viewBox="0 0 28 28"><circle cx="14" cy="14" r="13.6" fill="#fff" stroke="#e8e8e8" stroke-width=".8"/>
<clipPath id="clip5"><circle cx="14" cy="14" r="13.2"/></clipPath><g clip-path="url(#clip5)">
<g fill="#2e1b15"><ellipse cx="14" cy="10.5" rx="10" ry="9"/><circle cx="5.5" cy="15" r="3.6"/><circle cx="22.5" cy="15" r="3.6"/><circle cx="6.5" cy="18.5" r="2.8"/><circle cx="21.5" cy="18.5" r="2.8"/><circle cx="9" cy="3.8" r="3"/><circle cx="19" cy="3.8" r="3"/><circle cx="14" cy="2.8" r="3"/></g>
<path d="M5.5 28.5C5.5 23 8.5 20.5 14 20.5C19.5 20.5 22.5 23 22.5 28.5Z" fill="#e3ad80"/>
<path d="M7.2 28.5V22.6L9.6 21.8V24.6H18.4V21.8L20.8 22.6V28.5Z" fill="#f46262"/>
<rect x="12" y="17" width="4" height="5" fill="#e3ad80"/>
<ellipse cx="14" cy="12.8" rx="5.9" ry="6.9" fill="#e3ad80"/>
<path d="M7.6 10.5C8 5.2 20 5.2 20.4 10.5C18.5 8.4 9.5 8.4 7.6 10.5Z" fill="#2e1b15"/>
<ellipse cx="14" cy="16.6" rx="1.7" ry="1.6" fill="#e74f6b"/>
<path d="M10.6 12.2H12.4M15.6 12.2H17.4" stroke="#6b4a35" stroke-width=".7"/>
<ellipse cx="11" cy="14.5" rx=".8" ry="1.1" fill="#9fd3e8"/></g></svg>
<svg class="abs" style="left:993.50px;top:309.50px" width="27" height="27" viewBox="0 0 28 28"><circle cx="14" cy="14" r="13.6" fill="#fff" stroke="#e8e8e8" stroke-width=".8"/>
<clipPath id="clip6"><circle cx="14" cy="14" r="13.2"/></clipPath><g clip-path="url(#clip6)">
<path d="M3.5 28.5C3.5 23 7.5 21 14 21C20.5 21 24.5 23 24.5 28.5Z" fill="#a3a3a3"/>
<path d="M10.5 21H17.5L16.5 28.5H11.5Z" fill="#ececec"/>
<rect x="11.8" y="17" width="4.4" height="5" fill="#f28c3a"/>
<ellipse cx="14" cy="12.5" rx="6.4" ry="7.6" fill="#f7923c"/>
<ellipse cx="7.4" cy="13" rx="1.3" ry="2" fill="#f7923c"/><ellipse cx="20.6" cy="13" rx="1.3" ry="2" fill="#f7923c"/>
<path d="M8.6 6.2C10 3.8 18 3.8 19.4 6.2C17.2 5.4 10.8 5.4 8.6 6.2Z" fill="#e6e6e6"/>
<circle cx="11.4" cy="11.8" r="1.1" fill="#fff"/><circle cx="16.6" cy="11.8" r="1.1" fill="#fff"/>
<circle cx="11.4" cy="11.8" r=".55" fill="#333"/><circle cx="16.6" cy="11.8" r=".55" fill="#333"/>
<rect x="10.6" y="14.8" width="6.8" height="2.6" rx="1.1" fill="#fff"/></g></svg>
<svg class="abs" style="left:1018.50px;top:309.50px" width="27" height="27" viewBox="0 0 28 28"><circle cx="14" cy="14" r="13.6" fill="#fff" stroke="#e8e8e8" stroke-width=".8"/>
<clipPath id="clip7"><circle cx="14" cy="14" r="13.2"/></clipPath><g clip-path="url(#clip7)">
<path d="M3.5 28.5C3.5 23.5 7.5 21.5 14 21.5C20.5 21.5 24.5 23.5 24.5 28.5Z" fill="#8ef0a8"/>
<rect x="11.8" y="17" width="4.4" height="6" fill="#edcb47"/>
<ellipse cx="14" cy="12.6" rx="6.2" ry="7.4" fill="#f2d24c"/>
<path d="M7.6 10C7.2 4 10.5 2.2 14 2.2C18 2.2 20.8 3.8 20.4 10C19.5 7.2 17.8 6.6 14 6.6C10.2 6.6 8.5 7.2 7.6 10Z" fill="#b8582c"/>
<ellipse cx="11.3" cy="12" rx="2.2" ry="1.4" fill="#6e6a3a"/><ellipse cx="16.7" cy="12" rx="2.2" ry="1.4" fill="#6e6a3a"/>
<rect x="12.6" y="15.6" width="2.8" height="4" fill="#3d8a3a"/></g></svg>
<div class="abs" style="left:1056px;top:307px;width:32px;height:32px;border:1px solid #e5e5e5;border-radius:8px;background:#fafafa;box-shadow:0 1px 2px rgba(0,0,0,.05)"></div>
<svg class="abs" style="left:1065px;top:316px" width="14" height="14" viewBox="0 0 14 14"><path d="M7 1.5V12.5M1.5 7H12.5" stroke="#404040" stroke-width="1.4" stroke-linecap="round"/></svg>
<div class="abs" style="left:927px;top:372px;width:320px;height:395px;background:#fff;border:1px solid #e5e5e5;border-radius:12px"></div>
<div class="t" style="left:944.40px;top:394.64px;font-size:14.6px;color:#171717;letter-spacing:-0.002px;-webkit-text-stroke:0.15px #171717;">Recent Transfers</div>
<div class="t" style="left:1060.80px;top:394.64px;font-size:14.6px;color:#737373;letter-spacing:-0.022px;">(4)</div>
<svg class="abs" style="left:1119px;top:394px" width="14" height="14" viewBox="0 0 14 14"><g fill="none" stroke="#8c8c8c" stroke-width="1.2" stroke-linecap="round" stroke-linejoin="round"><path d="M1.5 3.3H12.5M5 3.3V2C5 1.5 5.4 1.2 5.8 1.2H8.2C8.6 1.2 9 1.5 9 2V3.3M2.8 3.3L3.4 11.5C3.5 12.3 4 12.8 4.8 12.8H9.2C10 12.8 10.5 12.3 10.6 11.5L11.2 3.3M5.7 6V10M8.3 6V10"/></g></svg>
<div class="t" style="left:1146.30px;top:394.84px;font-size:12.6px;color:#737373;letter-spacing:0.020px;">View details</div>
<svg class="abs" style="left:1219.5px;top:398px" width="10" height="7" viewBox="0 0 10 7"><path d="M1.5 1.8L4.5 4.6L7.5 1.8" stroke="#a3a3a3" fill="none" stroke-width="1.1" stroke-linecap="round"/></svg>
<svg class="abs" style="left:944.00px;top:435.00px" width="32" height="32" viewBox="0 0 28 28"><circle cx="14" cy="14" r="13.6" fill="#fff" stroke="#e8e8e8" stroke-width=".8"/>
<clipPath id="clip8"><circle cx="14" cy="14" r="13.2"/></clipPath><g clip-path="url(#clip8)">
<g fill="#2e1b15"><ellipse cx="14" cy="10.5" rx="10" ry="9"/><circle cx="5.5" cy="15" r="3.6"/><circle cx="22.5" cy="15" r="3.6"/><circle cx="6.5" cy="18.5" r="2.8"/><circle cx="21.5" cy="18.5" r="2.8"/><circle cx="9" cy="3.8" r="3"/><circle cx="19" cy="3.8" r="3"/><circle cx="14" cy="2.8" r="3"/></g>
<path d="M5.5 28.5C5.5 23 8.5 20.5 14 20.5C19.5 20.5 22.5 23 22.5 28.5Z" fill="#e3ad80"/>
<path d="M7.2 28.5V22.6L9.6 21.8V24.6H18.4V21.8L20.8 22.6V28.5Z" fill="#f46262"/>
<rect x="12" y="17" width="4" height="5" fill="#e3ad80"/>
<ellipse cx="14" cy="12.8" rx="5.9" ry="6.9" fill="#e3ad80"/>
<path d="M7.6 10.5C8 5.2 20 5.2 20.4 10.5C18.5 8.4 9.5 8.4 7.6 10.5Z" fill="#2e1b15"/>
<ellipse cx="14" cy="16.6" rx="1.7" ry="1.6" fill="#e74f6b"/>
<path d="M10.6 12.2H12.4M15.6 12.2H17.4" stroke="#6b4a35" stroke-width=".7"/>
<ellipse cx="11" cy="14.5" rx=".8" ry="1.1" fill="#9fd3e8"/></g></svg>
<div class="t" style="left:988.50px;top:437.99px;font-size:14.9px;color:#171717;letter-spacing:-0.026px;-webkit-text-stroke:0.15px #171717;">sarah@studiopost.tv</div>
<div class="t" style="left:988.50px;top:457.18px;font-size:12.55px;color:#737373;letter-spacing:-0.034px;">aerial_city_sunset_4k....</div>
<div class="abs" style="left:988px;top:480px;width:114px;height:6px;background:#f0f0f0;border-radius:3px"></div>
<div class="abs" style="left:988px;top:480px;width:72px;height:6px;background:#8b5cf6;border-radius:3px"></div>
<div class="t" style="right:149.27px;top:476.89px;font-size:11px;color:#737373;letter-spacing:-0.466px;">63%</div>
<div class="t" style="left:1143.90px;top:442.00px;font-size:10.75px;color:#737373;letter-spacing:-0.038px;">In progress</div>
<div class="abs" style="left:1206px;top:435px;width:24px;height:24px;background:#f3ecfe;border-radius:7px"></div>
<svg class="abs" style="left:1212px;top:441px" width="12" height="12" viewBox="0 0 12 12"><g fill="none" stroke="#a78bfa" stroke-width="1.2" stroke-linecap="round" stroke-linejoin="round"><path d="M2 4.6H10M2 4.6L4.2 2.4M2 7.6H10M10 7.6L7.8 9.8"/></g></svg>
<div class="abs" style="left:944.2px;top:502px;width:32px;height:32px;border-radius:50%;background:#f3f3f3;border:1px solid #e3e3e3"></div>
<div class="t" style="left:954.20px;top:514.14px;font-size:10px;color:#808080;letter-spacing:-0.981px;">JO</div>
<div class="t" style="left:988.50px;top:504.59px;font-size:14.9px;color:#171717;letter-spacing:0.042px;-webkit-text-stroke:0.15px #171717;">jordan@studiopost.tv</div>
<div class="t" style="left:988.50px;top:523.78px;font-size:12.55px;color:#737373;letter-spacing:-0.270px;">VO_final_mix.wav · 81.1...</div>
<div class="abs" style="left:988px;top:547px;width:120px;height:6px;background:#f0f0f0;border-radius:3px"></div>
<div class="t" style="right:149.91px;top:543.69px;font-size:11px;color:#737373;letter-spacing:-1.106px;">0%</div>
<div class="t" style="left:1143.90px;top:508.80px;font-size:10.75px;color:#737373;letter-spacing:-0.038px;">In progress</div>
<div class="abs" style="left:1206px;top:502px;width:24px;height:24px;background:#e6f0ff;border-radius:7px"></div>
<svg class="abs" style="left:1212px;top:508px" width="12" height="12" viewBox="0 0 12 12"><g fill="none" stroke="#5b9bf8" stroke-width="1.2" stroke-linecap="round" stroke-linejoin="round"><path d="M6 1.5V7.5M3.5 5.2L6 7.6L8.5 5.2M1.5 8C1.5 10 2.3 10.6 4 10.6H8C9.7 10.6 10.5 10 10.5 8"/></g></svg>
<div class="abs" style="left:944.2px;top:569px;width:32px;height:32px;border-radius:50%;background:#f3f3f3;border:1px solid #e3e3e3"></div>
<div class="t" style="left:954.20px;top:581.14px;font-size:10px;color:#808080;letter-spacing:-0.981px;">JO</div>
<div class="t" style="left:988.50px;top:572.14px;font-size:14.25px;color:#171717;letter-spacing:-0.004px;-webkit-text-stroke:0.15px #171717;">jordan@st...</div>
<div class="t" style="left:1076.20px;top:574.40px;font-size:10.75px;color:#10b981;letter-spacing:0.037px;-webkit-text-stroke:0.1px #10b981;">Completed</div>
<div class="t" style="right:82.44px;top:576.20px;font-size:10.75px;color:#737373;letter-spacing:-0.038px;">2 hours ago</div>
<div class="t" style="left:988.50px;top:590.98px;font-size:12.55px;color:#737373;letter-spacing:-0.170px;">Nike_Summer_v7.mp4 ...</div>
<div class="abs" style="left:1206px;top:569px;width:24px;height:24px;background:#e6f0ff;border-radius:7px"></div>
<svg class="abs" style="left:1212px;top:575px" width="12" height="12" viewBox="0 0 12 12"><g fill="none" stroke="#5b9bf8" stroke-width="1.2" stroke-linecap="round" stroke-linejoin="round"><path d="M6 1.5V7.5M3.5 5.2L6 7.6L8.5 5.2M1.5 8C1.5 10 2.3 10.6 4 10.6H8C9.7 10.6 10.5 10 10.5 8"/></g></svg>
<div class="abs" style="left:944.2px;top:617px;width:32px;height:32px;border-radius:50%;background:#f3f3f3;border:1px solid #e3e3e3"></div>
<div class="t" style="left:954.20px;top:629.14px;font-size:10px;color:#808080;letter-spacing:-0.981px;">JO</div>
<div class="t" style="left:988.50px;top:620.14px;font-size:14.25px;color:#171717;letter-spacing:-0.004px;-webkit-text-stroke:0.15px #171717;">jordan@st...</div>
<div class="t" style="left:1076.20px;top:622.40px;font-size:10.75px;color:#10b981;letter-spacing:0.037px;-webkit-text-stroke:0.1px #10b981;">Completed</div>
<div class="t" style="right:82.44px;top:624.20px;font-size:10.75px;color:#737373;letter-spacing:-0.038px;">4 hours ago</div>
<div class="t" style="left:988.50px;top:638.98px;font-size:12.55px;color:#737373;letter-spacing:-0.123px;">Ocean_Doc_Assembly...</div>
<div class="abs" style="left:1206px;top:617px;width:24px;height:24px;background:#e4f7ee;border-radius:7px"></div>
<svg class="abs" style="left:1212px;top:623px" width="12" height="12" viewBox="0 0 12 12"><g fill="none" stroke="#3ecf9a" stroke-width="1.2" stroke-linecap="round" stroke-linejoin="round"><path d="M6 7.6V1.6M3.5 3.9L6 1.5L8.5 3.9M1.5 8C1.5 10 2.3 10.6 4 10.6H8C9.7 10.6 10.5 10 10.5 8"/></g></svg>
</body></html>
